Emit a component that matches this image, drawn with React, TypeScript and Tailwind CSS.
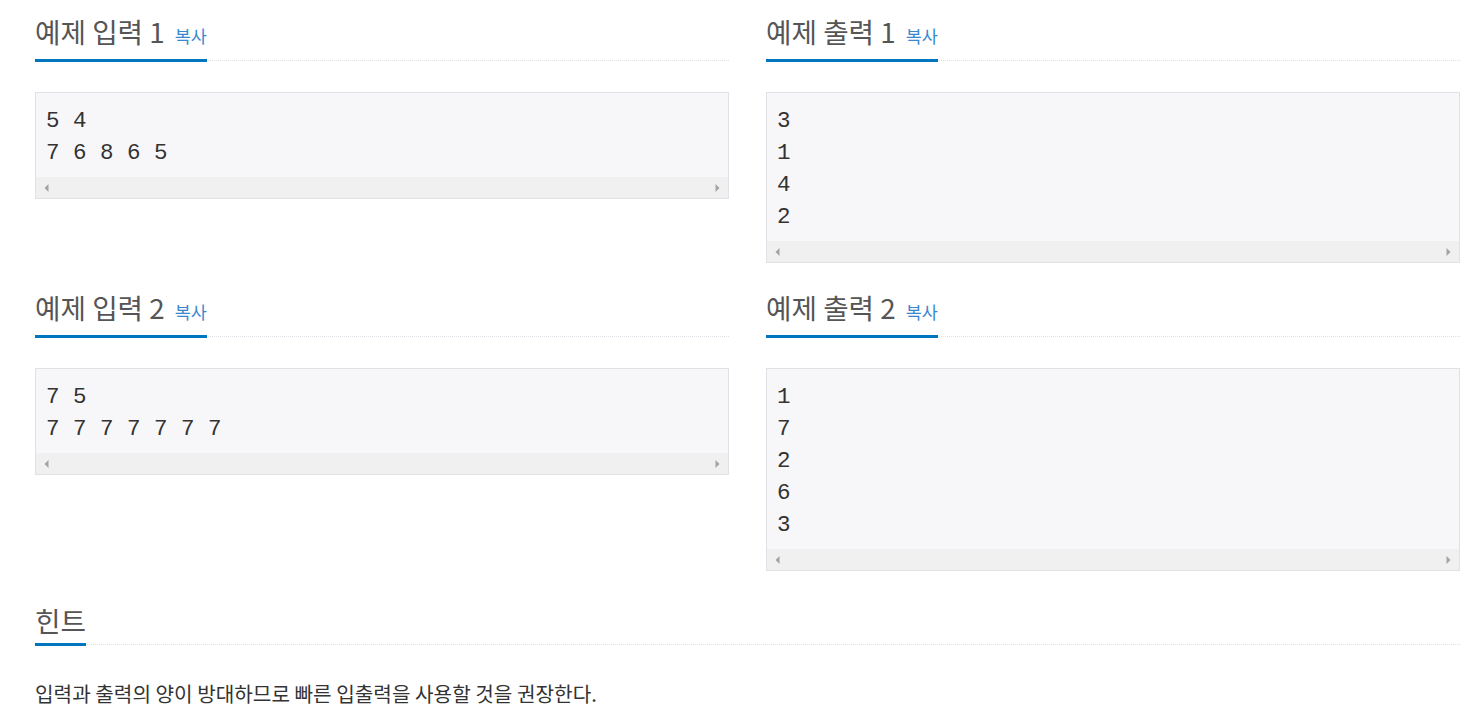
import React from "react";

const KR = "font-['Noto_Sans_CJK_KR','Noto_Sans',sans-serif]";

function Headline({
  title,
  copy,
  top = "mt-[10px]",
}: {
  title: string;
  copy?: boolean;
  top?: string;
}) {
  return (
    <div className={`${top} mb-[31px] border-b border-dotted border-[#dde1e6]`}>
      <h2
        className={`${KR} inline-block -mb-[2px] border-b-[3px] border-[#0076c0] pb-[5px] text-[27.7px] leading-[36px] font-normal text-[#555555]`}
      >
        {title}
        {copy && (
          <span className="ml-[10px] text-[17.5px] text-[#3a87d0]">복사</span>
        )}
      </h2>
    </div>
  );
}

function Arrow({ dir }: { dir: "left" | "right" }) {
  return (
    <div className="flex h-[21px] w-[21px] items-center justify-center">
      <svg width="5" height="8" viewBox="0 0 5 8">
        {dir === "left" ? (
          <polygon points="4.5,0 4.5,8 0.5,4" fill="#a3a3a3" />
        ) : (
          <polygon points="0.5,0 0.5,8 4.5,4" fill="#a3a3a3" />
        )}
      </svg>
    </div>
  );
}

function Sample({ text }: { text: string }) {
  return (
    <div className="mb-[21px] border border-[#e1e1e8] bg-[#f7f7f9]">
      <div className="whitespace-pre px-[10px] pt-[12px] pb-[8px] font-['Liberation_Mono',monospace] text-[22.5px] leading-[32px] text-[#333333]">
        {text}
      </div>
      <div className="flex h-[21px] justify-between bg-[#f0f0f0]">
        <Arrow dir="left" />
        <Arrow dir="right" />
      </div>
    </div>
  );
}

function Section({
  title,
  text,
  top,
}: {
  title: string;
  text: string;
  top?: string;
}) {
  return (
    <section>
      <Headline title={title} copy top={top} />
      <Sample text={text} />
    </section>
  );
}

export default function App() {
  return (
    <div className="min-h-[720px] bg-white pt-[3px] pl-[35px]">
      <div className="grid w-[1425px] grid-cols-[694px_694px] items-start gap-x-[37px]">
        <Section title="예제 입력 1" text={"5 4\n7 6 8 6 5"} />
        <Section title="예제 출력 1" text={"3\n1\n4\n2"} />
        <Section title="예제 입력 2" text={"7 5\n7 7 7 7 7 7 7"} top="mt-[5px]" />
        <Section title="예제 출력 2" text={"1\n7\n2\n6\n3"} top="mt-[5px]" />
        <section className="col-span-2">
          <Headline title="힌트" />
          <p className={`${KR} text-[20.2px] leading-[36px] text-[#333333]`}>
            입력과 출력의 양이 방대하므로 빠른 입출력을 사용할 것을 권장한다.
          </p>
        </section>
      </div>
    </div>
  );
}
